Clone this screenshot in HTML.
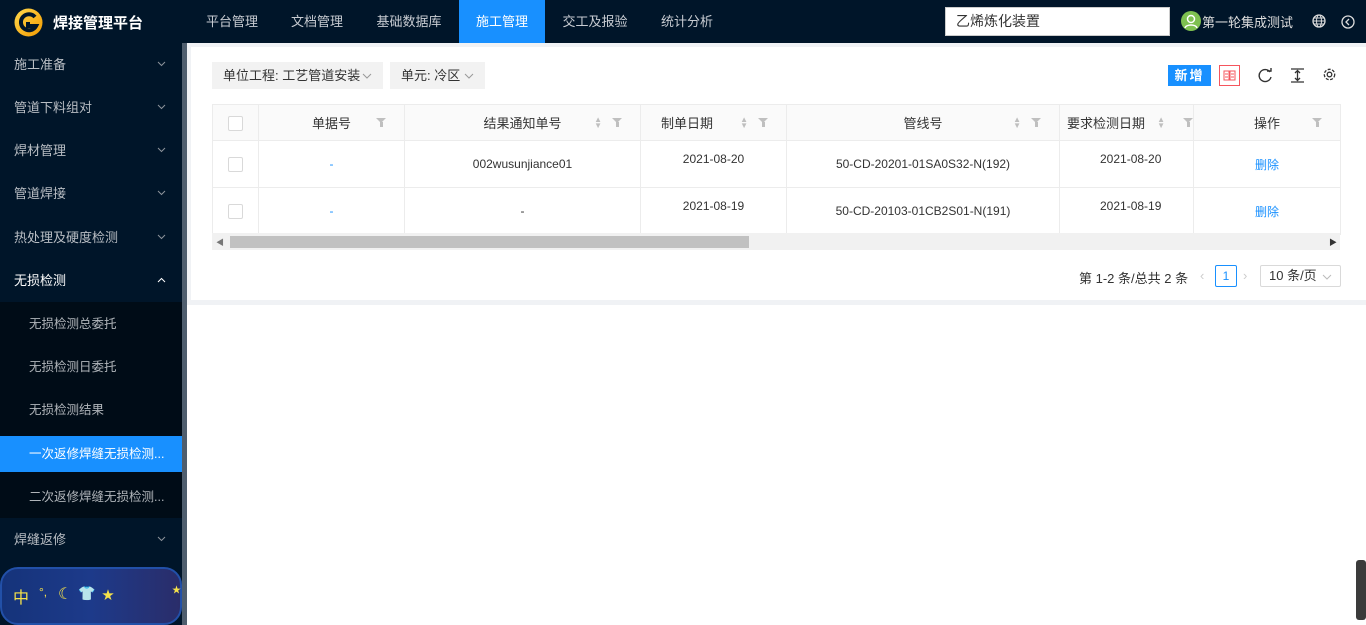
<!DOCTYPE html>
<html><head><meta charset="utf-8">
<style>
*{margin:0;padding:0;box-sizing:border-box}
body{width:1366px;height:625px;overflow:hidden;font-family:"Liberation Sans","Noto Sans CJK SC",sans-serif;font-size:13px;color:#333;background:#fff;position:relative}
.top{position:absolute;left:0;top:0;width:1366px;height:43px;background:#001529}
.logo{position:absolute;left:14px;top:8px;width:29px;height:29px}
.title{position:absolute;left:53px;top:12px;color:#fff;font-size:15px;font-weight:bold}
.nav{position:absolute;top:0;height:43px;line-height:43px;color:#c8ccd2;font-size:13px;text-align:center}
.nav.act{background:#1890ff;color:#fff}
.search{position:absolute;left:945px;top:7px;width:225px;height:29px;background:#fff;border:1px solid #ccc;padding-left:10px;line-height:27px;font-size:14px;color:#333}
.av{position:absolute;left:1181px;top:11px;width:20px;height:20px;border-radius:50%;background:#7ec050}
.user{position:absolute;left:1202px;top:12px;color:#ddd;font-size:13px}
.side{position:absolute;left:0;top:43px;width:182px;height:582px;background:#001529}
.sb{position:absolute;left:182px;top:43px;width:5px;height:582px;background:#4f5e6e}
.mi{position:absolute;left:0;width:182px;height:43px;line-height:43px;padding-left:14px;color:#b9bec4;font-size:13px}
.mi svg{position:absolute;right:16px;top:18px}
.sub{position:absolute;left:0;top:302px;width:182px;height:216px;background:#000c17}
.si{position:absolute;left:0;width:182px;height:36px;line-height:36px;padding-left:29px;color:#b0b5ba;font-size:12.5px;white-space:nowrap}
.si.act{background:#1890ff;color:#fff}
.banner{position:absolute;left:0;top:567px;width:182px;height:58px;border-radius:18px;background:linear-gradient(90deg,#15337a,#1d3a8a 50%,#2a2d6a);border:2px solid #2250a8;color:#f6e24a;font-size:16px}
.panel{position:absolute;left:191px;top:47px;width:1175px;height:253px;background:#fff}
.pbar{position:absolute;left:187px;top:300px;width:1179px;height:5px;background:#f0f2f5}
.pleft{position:absolute;left:187px;top:43px;width:4px;height:260px;background:#f0f2f5}
.ptop{position:absolute;left:187px;top:43px;width:1179px;height:4px;background:#f0f2f5}
.chip{position:absolute;top:62px;height:27px;line-height:27px;background:#f2f2f2;padding-left:11px;font-size:13px;color:#333}
.chip svg{position:absolute;right:11px;top:11px}
.btn{position:absolute;left:1168px;top:65px;width:43px;height:21px;background:#1890ff;color:#fff;line-height:21px;text-align:center;font-size:13px;font-weight:bold;letter-spacing:2px}
table{position:absolute;left:212px;top:104px;border-collapse:collapse;table-layout:fixed}
td,th{border:1px solid #ececec;text-align:center;font-weight:normal;font-size:12px;color:#333;position:relative}
th{background:#fafafa;height:36px;font-size:13px}
td{height:47px}
.cb{display:inline-block;width:15px;height:15px;border:1px solid #d9d9d9;border-radius:2px;background:#fff;vertical-align:middle}
.f{position:absolute;right:18px;top:13px;width:0;height:0;border-left:5px solid transparent;border-right:5px solid transparent;border-top:5px solid #bfbfbf}
.f:after{content:"";position:absolute;left:-1.5px;top:-1px;width:3px;height:5px;background:#bfbfbf}
.s{position:absolute;top:12px;font-size:8px;color:#bfbfbf;line-height:6px}
.blue{color:#1890ff}
.hs{position:absolute;left:212px;top:233px;width:1128px;height:17px;background:#f1f1f1}
.thumb{position:absolute;left:230px;top:236px;width:519px;height:12px;background:#c1c1c1}
.pg{position:absolute;top:268px;font-size:13px;color:#333}
</style></head><body>
<div class="top"></div>
<svg class="logo" viewBox="0 0 29 29"><defs><linearGradient id="g" x1="0" y1="0" x2="1" y2="1"><stop offset="0" stop-color="#ffd84d"/><stop offset="1" stop-color="#f29a00"/></linearGradient></defs><circle cx="14.5" cy="14.5" r="14" fill="url(#g)"/><path d="M21 9A8 8 0 1 0 22 18H14V14" fill="none" stroke="#001529" stroke-width="4"/></svg>
<div class="title">焊接管理平台</div>
<div class="nav" style="left:191px;width:82px">平台管理</div>
<div class="nav" style="left:276px;width:82px">文档管理</div>
<div class="nav" style="left:363px;width:92px">基础数据库</div>
<div class="nav act" style="left:459px;width:86px">施工管理</div>
<div class="nav" style="left:549px;width:92px">交工及报验</div>
<div class="nav" style="left:646px;width:82px">统计分析</div>
<div class="search">乙烯炼化装置</div>
<div class="av"><svg width="20" height="20"><circle cx="10" cy="8" r="3.5" fill="none" stroke="#fff" stroke-width="1.5"/><path d="M4 17c1-4 11-4 12 0" fill="none" stroke="#fff" stroke-width="1.5"/></svg></div>
<div class="user">第一轮集成测试</div>
<svg style="position:absolute;left:1312px;top:14px" width="14" height="14"><circle cx="7" cy="7" r="6" fill="none" stroke="#ddd" stroke-width="1.3"/><ellipse cx="7" cy="7" rx="2.5" ry="6" fill="none" stroke="#ddd"/><path d="M1 7h12M2 4h10M2 10h10" stroke="#ddd"/></svg>
<svg style="position:absolute;left:1341px;top:15px" width="14" height="14"><circle cx="7" cy="7" r="6" fill="none" stroke="#ddd" stroke-width="1.3"/><path d="M8 4L5 7l3 3" fill="none" stroke="#ddd" stroke-width="1.3"/></svg>

<div class="side"></div>
<div class="sb"></div>
<div class="mi" style="top:43px">施工准备<svg width="9" height="6"><path d="M1 1l3.5 3.5L8 1" fill="none" stroke="#8c939b"/></svg></div>
<div class="mi" style="top:86px">管道下料组对<svg width="9" height="6"><path d="M1 1l3.5 3.5L8 1" fill="none" stroke="#8c939b"/></svg></div>
<div class="mi" style="top:129px">焊材管理<svg width="9" height="6"><path d="M1 1l3.5 3.5L8 1" fill="none" stroke="#8c939b"/></svg></div>
<div class="mi" style="top:172px">管道焊接<svg width="9" height="6"><path d="M1 1l3.5 3.5L8 1" fill="none" stroke="#8c939b"/></svg></div>
<div class="mi" style="top:216px">热处理及硬度检测<svg width="9" height="6"><path d="M1 1l3.5 3.5L8 1" fill="none" stroke="#8c939b"/></svg></div>
<div class="mi" style="top:259px;color:#fff;background:#001529">无损检测<svg width="9" height="6"><path d="M1 5l3.5-3.5L8 5" fill="none" stroke="#fff"/></svg></div>
<div class="sub"></div>
<div class="si" style="top:306px">无损检测总委托</div>
<div class="si" style="top:349px">无损检测日委托</div>
<div class="si" style="top:392px">无损检测结果</div>
<div class="si act" style="top:436px">一次返修焊缝无损检测...</div>
<div class="si" style="top:479px">二次返修焊缝无损检测...</div>
<div class="mi" style="top:518px">焊缝返修<svg width="9" height="6"><path d="M1 1l3.5 3.5L8 1" fill="none" stroke="#8c939b"/></svg></div>
<div class="banner"><span style="position:absolute;left:11px;top:15px">中</span><span style="position:absolute;left:37px;top:16px;font-size:12px">°,</span><span style="position:absolute;left:56px;top:15px">☾</span><span style="position:absolute;left:76px;top:16px;font-size:14px">👕</span><span style="position:absolute;left:100px;top:17px;font-size:12px">★</span><span style="position:absolute;left:170px;top:14px;font-size:9px">★</span></div>

<div class="ptop"></div><div class="pleft"></div>
<div class="panel"></div>
<div class="pbar"></div>
<div class="chip" style="left:212px;width:171px">单位工程: 工艺管道安装<svg width="10" height="6"><path d="M1 1l4 4 4-4" fill="none" stroke="#999"/></svg></div>
<div class="chip" style="left:390px;width:95px">单元: 冷区<svg width="10" height="6"><path d="M1 1l4 4 4-4" fill="none" stroke="#999"/></svg></div>
<div class="btn">新增</div>
<svg style="position:absolute;left:1219px;top:65px" width="21" height="21"><rect x=".5" y=".5" width="20" height="20" fill="#fff" stroke="#f5555d"/><path d="M5 6h5v9H5zM11 6h5v9h-5zM6 9h3M12 9h3M6 12h3M12 12h3" fill="none" stroke="#f5555d"/></svg>
<svg style="position:absolute;left:1258px;top:68px" width="15" height="15"><path d="M12 4A6 6 0 1 0 13 9" fill="none" stroke="#333" stroke-width="1.4"/><path d="M9 3h4V0" fill="none" stroke="#333" stroke-width="1.4"/></svg>
<svg style="position:absolute;left:1290px;top:68px" width="15" height="15"><path d="M1 1h13M1 14h13M7.5 3v9M5 5l2.5-2.5L10 5M5 10l2.5 2.5L10 10" fill="none" stroke="#333" stroke-width="1.3"/></svg>
<svg style="position:absolute;left:1322px;top:67px" width="15" height="15"><circle cx="7.5" cy="7.5" r="2.3" fill="none" stroke="#333" stroke-width="1.3"/><circle cx="7.5" cy="7.5" r="5.2" fill="none" stroke="#333" stroke-width="1.3" stroke-dasharray="3 1.5"/></svg>

<table>
<colgroup><col style="width:46px"><col style="width:146px"><col style="width:236px"><col style="width:146px"><col style="width:273px"><col style="width:134px"><col style="width:147px"></colgroup>
<tr><th><span class="cb"></span></th><th>单据号<i class="f"></i></th><th>结果通知单号<span class="s" style="right:38px">▲<br>▼</span><i class="f"></i></th><th style="text-align:left;padding-left:20px">制单日期<span class="s" style="right:38px">▲<br>▼</span><i class="f"></i></th><th>管线号<span class="s" style="right:38px">▲<br>▼</span><i class="f"></i></th><th style="text-align:left;padding-left:7px;white-space:nowrap;overflow:hidden">要求检测日期<span class="s" style="right:28px">▲<br>▼</span><i class="f" style="right:0"></i></th><th style="box-shadow:-6px 0 8px -4px rgba(0,0,0,.15)">操作<i class="f"></i></th></tr>
<tr><td><span class="cb"></span></td><td class="blue">-</td><td>002wusunjiance01</td><td style="vertical-align:top;padding-top:11px">2021-08-20</td><td>50-CD-20201-01SA0S32-N(192)</td><td style="vertical-align:top;padding-top:11px;text-align:left;padding-left:40px">2021-08-20</td><td class="blue" style="box-shadow:-6px 0 8px -4px rgba(0,0,0,.15)">删除</td></tr>
<tr><td><span class="cb"></span></td><td class="blue">-</td><td>-</td><td style="vertical-align:top;padding-top:11px">2021-08-19</td><td>50-CD-20103-01CB2S01-N(191)</td><td style="vertical-align:top;padding-top:11px;text-align:left;padding-left:40px">2021-08-19</td><td class="blue" style="box-shadow:-6px 0 8px -4px rgba(0,0,0,.15)">删除</td></tr>
</table>
<div class="hs"></div><div class="thumb"></div>
<div style="position:absolute;left:216px;top:237px;font-size:8px;color:#777">◀</div>
<div style="position:absolute;left:1329px;top:237px;font-size:8px;color:#333">▶</div>
<div class="pg" style="left:1079px">第 1-2 条/总共 2 条</div>
<div class="pg" style="left:1200px;color:#ccc">‹</div>
<div style="position:absolute;left:1215px;top:265px;width:22px;height:22px;border:1px solid #1890ff;border-radius:2px;color:#1890ff;text-align:center;line-height:20px;font-size:12px">1</div>
<div class="pg" style="left:1243px;color:#ccc">›</div>
<div style="position:absolute;left:1260px;top:265px;width:81px;height:22px;border:1px solid #d9d9d9;border-radius:2px;line-height:20px;padding-left:8px;font-size:13px">10 条/页<svg style="position:absolute;right:8px;top:8px" width="10" height="6"><path d="M1 1l4 4 4-4" fill="none" stroke="#bbb"/></svg></div>
<div style="position:absolute;left:1356px;top:560px;width:10px;height:60px;background:#3b3b3b;border-radius:3px"></div>
</body></html>
